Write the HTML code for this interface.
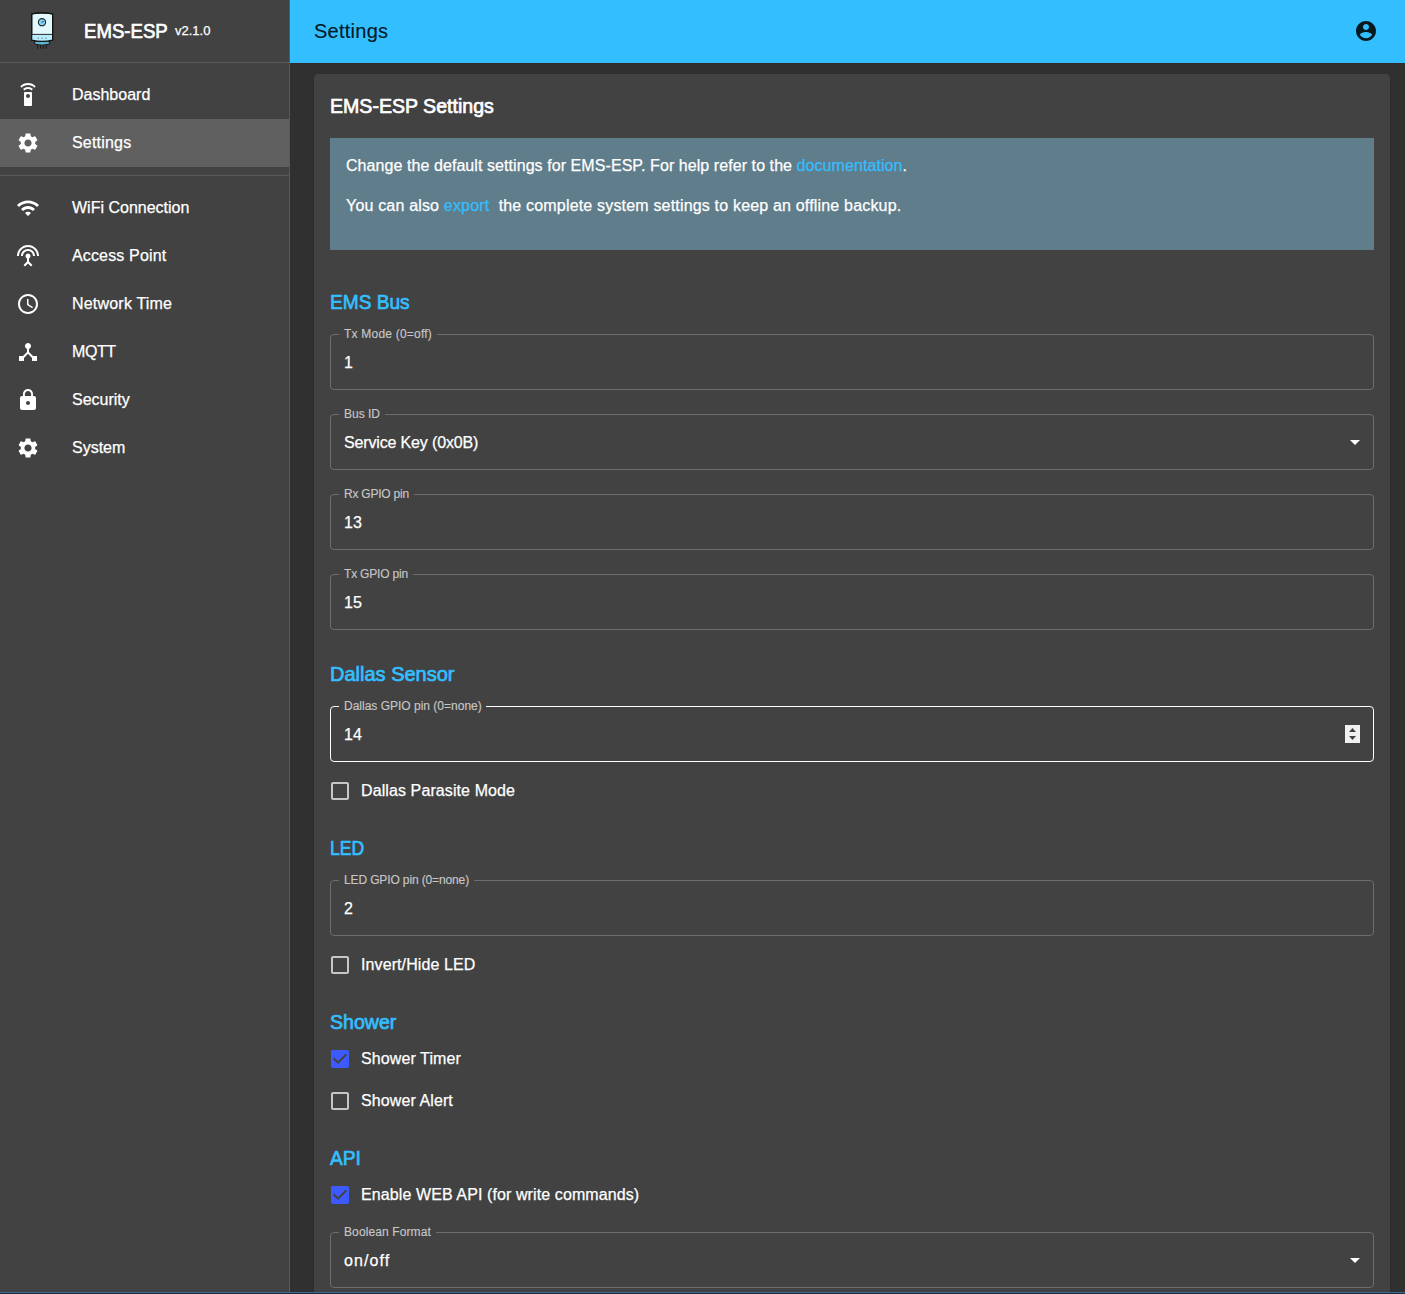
<!DOCTYPE html>
<html><head><meta charset="utf-8">
<style>
*{box-sizing:border-box;margin:0;padding:0}
html,body{width:1405px;height:1294px;overflow:hidden;background:#303030;font-family:"Liberation Sans",sans-serif;color:#fff}
#drawer{position:absolute;left:0;top:0;width:290px;height:1294px;background:#424242;border-right:1px solid #595959}
#dhead{position:absolute;left:0;top:0;width:289px;height:62px}
#dhead .t1{position:absolute;left:84px;top:19px;font-size:20px;font-weight:400;line-height:24px;-webkit-text-stroke:0.7px #fff;white-space:nowrap;transform:scaleX(0.93);transform-origin:0 0}
#dhead .t2{position:absolute;left:175px;top:23px;font-size:13px;line-height:15px;white-space:nowrap;-webkit-text-stroke:0.25px #fff}
.div{position:absolute;left:0;width:289px;height:1px;background:#595959}
.nav{position:absolute;left:0;width:289px;height:48px}
.nav.sel{background:#606060}
.nav svg{position:absolute;left:16px;top:12px;width:24px;height:24px;fill:#fff}
.nav span{position:absolute;left:72px;top:12px;font-size:16px;line-height:24px;white-space:nowrap;-webkit-text-stroke:0.25px currentColor}
#appbar{position:absolute;left:290px;top:0;width:1115px;height:63px;background:#33bfff;box-shadow:0 1px 0 #352a28;z-index:2}
#appbar .title{position:absolute;left:24px;top:15px;font-size:20px;line-height:32px;letter-spacing:0.25px;color:rgba(0,0,0,.87);-webkit-text-stroke:0.2px rgba(0,0,0,.87);white-space:nowrap}
#appbar svg{position:absolute;left:1064px;top:19px;width:24px;height:24px;fill:rgba(0,0,0,.87)}
#paper{display:flex;flex-direction:column;position:absolute;left:314px;top:74px;width:1076px;height:1300px;background:#424242;border-radius:4px;box-shadow:0 2px 1px -1px rgba(0,0,0,.2),0 1px 1px 0 rgba(0,0,0,.14),0 1px 3px 0 rgba(0,0,0,.12);padding:16px}
h6{font-size:20px;font-weight:400;line-height:32px;white-space:nowrap;-webkit-text-stroke:0.7px currentColor}
h6.p{color:#33bfff}
.info{background:#607d8b;padding:16px;margin-top:16px;margin-bottom:16px}
.info p{font-size:16px;line-height:24px;margin-bottom:16px;white-space:nowrap;-webkit-text-stroke:0.25px currentColor}
.info a{color:#33bfff;text-decoration:none}
.br{height:20px}
.field{position:relative;height:56px;margin-top:16px;margin-bottom:8px}
.field fieldset{position:absolute;left:0;top:-5px;right:0;bottom:0;border:1px solid #6d6d6d;border-radius:4px;padding:0 8px}
.field.hov fieldset{border-color:#fff}
.field legend{font-size:12px;line-height:11px;height:11px;padding:0;visibility:hidden;white-space:nowrap;overflow:hidden}
.field label{position:absolute;left:14px;top:-7px;font-size:12px;line-height:14px;color:#c6c6c6;white-space:nowrap;-webkit-text-stroke:0.15px currentColor}
.field .val{position:absolute;left:14px;top:19px;font-size:16px;line-height:19px;white-space:nowrap;-webkit-text-stroke:0.25px currentColor}
.field .arrow{position:absolute;right:7px;top:16px;width:24px;height:24px;fill:#fff}
.spin{position:absolute;left:1015px;top:19px;width:15px;height:18px;background:#f0f0f0}
.cb{position:relative;height:42px}
.cb svg{position:absolute;left:-2px;top:9px;width:24px;height:24px}
.cb span{position:absolute;left:31px;top:9px;font-size:16px;line-height:24px;letter-spacing:0.1px;white-space:nowrap;-webkit-text-stroke:0.25px currentColor}
#bline{position:absolute;left:0;top:1292px;width:1405px;height:2px;background:linear-gradient(#3a6a92 50%,#1c2c38 50%)}
</style></head><body>
<div id="drawer">
  <div id="dhead">
    <svg style="position:absolute;left:0;top:0" width="60" height="60" viewBox="0 0 60 60">
<path d="M34.7 41 H49.4 V44.2 Q42 46.2 34.7 44.2 Z" fill="#5fb3d4" stroke="#1a1a1a" stroke-width="1"/>
<path d="M37.6 45 V48.8 M40.5 45 V48.8 M43.4 45 V48.8 M46.3 45 V48.8" stroke="#1a1a1a" stroke-width="1"/>
<path d="M31.7 14 Q42 11.8 52.6 14 V40.2 Q42 42.6 31.7 40.2 Z" fill="#e1f8fd" stroke="#141414" stroke-width="1.2"/>
<path d="M31.7 34.6 H52.6 V40.2 Q42 42.6 31.7 40.2 Z" fill="#b8ecfb"/>
<path d="M31.7 34.4 H52.6" stroke="#2a2a2a" stroke-width="1"/>
<path d="M31.7 14 Q42 11.8 52.6 14 V40.2 Q42 42.6 31.7 40.2 Z" fill="none" stroke="#141414" stroke-width="1.2"/>
<circle cx="42" cy="22.2" r="3.6" fill="#7fd3f5" stroke="#222" stroke-width="1.1"/>
<path d="M42 22.6 L43.4 21" stroke="#111" stroke-width="0.9"/>
<path d="M37.6 38.2 H38.8 M41.4 38.2 H42.6 M45.2 38.2 H46.4" stroke="#555" stroke-width="0.9"/>
</svg>
    <div class="t1">EMS-ESP</div><div class="t2">v2.1.0</div>
  </div>
  <div class="div" style="top:62px"></div>
  <div class="nav" style="top:71px"><svg viewBox="0 0 24 24"><path d="M15 9H9c-.55 0-1 .45-1 1v12c0 .55.45 1 1 1h6c.55 0 1-.45 1-1V10c0-.55-.45-1-1-1zm-3 6c-1.1 0-2-.9-2-2s.9-2 2-2 2 .9 2 2-.9 2-2 2zM7.05 6.05l1.41 1.41C9.37 6.56 10.62 6 12 6s2.63.56 3.54 1.46l1.41-1.41C15.68 4.78 13.93 4 12 4s-3.68.78-4.95 2.05zM12 0C8.96 0 6.21 1.23 4.22 3.22l1.41 1.41C7.26 3.01 9.51 2 12 2s4.74 1.01 6.36 2.64l1.41-1.41C17.79 1.23 15.04 0 12 0z"/></svg><span>Dashboard</span></div>
  <div class="nav sel" style="top:119px"><svg viewBox="0 0 24 24"><path d="M19.14 12.94c.04-.3.06-.61.06-.94 0-.32-.02-.64-.07-.94l2.03-1.58c.18-.14.23-.41.12-.61l-1.92-3.32c-.12-.22-.37-.29-.59-.22l-2.39.96c-.5-.38-1.03-.7-1.62-.94l-.36-2.54c-.04-.24-.24-.41-.48-.41h-3.84c-.24 0-.43.17-.47.41l-.36 2.54c-.59.24-1.13.57-1.62.94l-2.39-.96c-.22-.08-.47 0-.59.22L2.74 8.87c-.12.21-.08.47.12.61l2.03 1.58c-.05.3-.09.63-.09.94s.02.64.07.94l-2.03 1.58c-.18.14-.23.41-.12.61l1.92 3.32c.12.22.37.29.59.22l2.39-.96c.5.38 1.03.7 1.62.94l.36 2.54c.05.24.24.41.48.41h3.84c.24 0 .44-.17.47-.41l.36-2.54c.59-.24 1.13-.56 1.62-.94l2.39.96c.22.08.47 0 .59-.22l1.92-3.32c.12-.22.07-.47-.12-.61l-2.01-1.58zM12 15.6c-1.98 0-3.6-1.62-3.6-3.6s1.62-3.6 3.6-3.6 3.6 1.62 3.6 3.6-1.62 3.6-3.6 3.6z"/></svg><span style="letter-spacing:0.2px">Settings</span></div>
  <div class="div" style="top:175px"></div>
  <div class="nav" style="top:184px"><svg viewBox="0 0 24 24"><path d="M1 9l2 2c4.97-4.97 13.03-4.97 18 0l2-2C16.93 2.93 7.08 2.93 1 9zm8 8l3 3 3-3c-1.65-1.66-4.34-1.66-6 0zm-4-4l2 2c2.76-2.76 7.24-2.76 10 0l2-2C15.14 9.14 8.87 9.14 5 13z"/></svg><span>WiFi Connection</span></div>
  <div class="nav" style="top:232px"><svg viewBox="0 0 24 24"><path d="M12 5c-3.87 0-7 3.13-7 7h2c0-2.76 2.24-5 5-5s5 2.24 5 5h2c0-3.87-3.13-7-7-7zm1 9.29c.88-.39 1.5-1.26 1.5-2.29 0-1.38-1.12-2.5-2.5-2.5S9.5 10.62 9.5 12c0 1.02.62 1.9 1.5 2.29v3.3L7.59 21 9 22.41l3-3 3 3L16.41 21 13 17.59v-3.3zM12 1C5.93 1 1 5.93 1 12h2c0-4.97 4.03-9 9-9s9 4.03 9 9h2c0-6.07-4.93-11-11-11z"/></svg><span style="letter-spacing:0.15px">Access Point</span></div>
  <div class="nav" style="top:280px"><svg viewBox="0 0 24 24"><path d="M11.99 2C6.47 2 2 6.48 2 12s4.47 10 9.99 10C17.52 22 22 17.52 22 12S17.52 2 11.99 2zM12 20c-4.42 0-8-3.58-8-8s3.58-8 8-8 8 3.58 8 8-3.58 8-8 8zm.5-13H11v6l5.25 3.15.75-1.23-4.5-2.67z"/></svg><span style="letter-spacing:0.2px">Network Time</span></div>
  <div class="nav" style="top:328px"><svg viewBox="0 0 24 24"><path d="M17 16l-4-4V8.82C14.16 8.4 15 7.3 15 6c0-1.66-1.34-3-3-3S9 4.34 9 6c0 1.3.84 2.4 2 2.82V12l-4 4H3v5h5v-3.05l4-4.2 4 4.2V21h5v-5h-4z"/></svg><span style="letter-spacing:-0.4px">MQTT</span></div>
  <div class="nav" style="top:376px"><svg viewBox="0 0 24 24"><path d="M18 8h-1V6c0-2.76-2.24-5-5-5S7 3.24 7 6v2H6c-1.1 0-2 .9-2 2v10c0 1.1.9 2 2 2h12c1.1 0 2-.9 2-2V10c0-1.1-.9-2-2-2zm-6 9c-1.1 0-2-.9-2-2s.9-2 2-2 2 .9 2 2-.9 2-2 2zm3.1-9H8.9V6c0-1.71 1.39-3.1 3.1-3.1 1.710 0 3.1 1.39 3.1 3.1v2z"/></svg><span>Security</span></div>
  <div class="nav" style="top:424px"><svg viewBox="0 0 24 24"><path d="M19.14 12.94c.04-.3.06-.61.06-.94 0-.32-.02-.64-.07-.94l2.03-1.58c.18-.14.23-.41.12-.61l-1.92-3.32c-.12-.22-.37-.29-.59-.22l-2.39.96c-.5-.38-1.03-.7-1.62-.94l-.36-2.54c-.04-.24-.24-.41-.48-.41h-3.84c-.24 0-.43.17-.47.41l-.36 2.54c-.59.24-1.13.57-1.62.94l-2.39-.96c-.22-.08-.47 0-.59.22L2.74 8.87c-.12.21-.08.47.12.61l2.03 1.58c-.05.3-.09.63-.09.94s.02.64.07.94l-2.03 1.58c-.18.14-.23.41-.12.61l1.92 3.32c.12.22.37.29.59.22l2.39-.96c.5.38 1.03.7 1.62.94l.36 2.54c.05.24.24.41.48.41h3.84c.24 0 .44-.17.47-.41l.36-2.54c.59-.24 1.13-.56 1.62-.94l2.39.96c.22.08.47 0 .59-.22l1.92-3.32c.12-.22.07-.47-.12-.61l-2.01-1.58zM12 15.6c-1.98 0-3.6-1.62-3.6-3.6s1.62-3.6 3.6-3.6 3.6 1.62 3.6 3.6-1.62 3.6-3.6 3.6z"/></svg><span>System</span></div>
</div>
<div id="appbar"><div class="title">Settings</div>
<svg viewBox="0 0 24 24"><path d="M12 2C6.48 2 2 6.48 2 12s4.48 10 10 10 10-4.480 10-10S17.52 2 12 2zm0 3c1.66 0 3 1.34 3 3s-1.34 3-3 3-3-1.34-3-3 1.34-3 3-3zm0 14.2c-2.5 0-4.71-1.28-6-3.22.03-1.99 4-3.08 6-3.08 1.99 0 5.97 1.09 6 3.08-1.29 1.94-3.5 3.22-6 3.22z"/></svg></div>
<div id="paper">
  <h6 style="transform:scaleX(0.978);transform-origin:0 0">EMS-ESP Settings</h6>
  <div class="info"><p style="letter-spacing:0.07px">Change the default settings for EMS-ESP. For help refer to the <a>documentation</a>.</p><p style="letter-spacing:0.18px">You can also <a>export</a>&nbsp; the complete system settings to keep an offline backup.</p></div>
  <div class="br"></div>
  <h6 class="p" style="transform:scaleX(0.955);transform-origin:0 0">EMS Bus</h6>
  <div class="field "><fieldset><legend style="width:98px">Tx Mode (0=off)</legend></fieldset><label style="letter-spacing:0.21px">Tx Mode (0=off)</label><div class="val">1</div></div>
  <div class="field "><fieldset><legend style="width:46px">Bus ID</legend></fieldset><label>Bus ID</label><div class="val" style="letter-spacing:-0.15px">Service Key (0x0B)</div><svg class="arrow" viewBox="0 0 24 24"><path d="M7 10l5 5 5-5z"/></svg></div>
  <div class="field "><fieldset><legend style="width:75px">Rx GPIO pin</legend></fieldset><label style="letter-spacing:-0.22px">Rx GPIO pin</label><div class="val">13</div></div>
  <div class="field "><fieldset><legend style="width:74px">Tx GPIO pin</legend></fieldset><label style="letter-spacing:-0.18px">Tx GPIO pin</label><div class="val">15</div></div>
  <div class="br"></div>
  <h6 class="p">Dallas Sensor</h6>
  <div class="field hov"><fieldset><legend style="width:147px">Dallas GPIO pin (0=none)</legend></fieldset><label>Dallas GPIO pin (0=none)</label><div class="val">14</div><div class="spin"><svg width="15" height="18" viewBox="0 0 15 18" style="position:absolute;left:0;top:0"><path d="M4 7L7.5 3 11 7z M4 11L7.5 15 11 11z" fill="#404040"/></svg></div></div>
  <div class="cb"><svg viewBox="0 0 24 24"><path fill="#c6c6c6" d="M19 5v14H5V5h14m0-2H5c-1.1 0-2 .9-2 2v14c0 1.1.9 2 2 2h14c1.1 0 2-.9 2-2V5c0-1.1-.9-2-2-2z"/></svg><span>Dallas Parasite Mode</span></div>
  <div class="br"></div>
  <h6 class="p" style="transform:scaleX(0.88);transform-origin:0 0">LED</h6>
  <div class="field "><fieldset><legend style="width:135px">LED GPIO pin (0=none)</legend></fieldset><label style="letter-spacing:-0.13px">LED GPIO pin (0=none)</label><div class="val">2</div></div>
  <div class="cb"><svg viewBox="0 0 24 24"><path fill="#c6c6c6" d="M19 5v14H5V5h14m0-2H5c-1.1 0-2 .9-2 2v14c0 1.1.9 2 2 2h14c1.1 0 2-.9 2-2V5c0-1.1-.9-2-2-2z"/></svg><span>Invert/Hide LED</span></div>
  <div class="br"></div>
  <h6 class="p" style="transform:scaleX(0.978);transform-origin:0 0">Shower</h6>
  <div class="cb"><svg viewBox="0 0 24 24"><path fill="#3d5afe" d="M19 3H5c-1.11 0-2 .9-2 2v14c0 1.1.89 2 2 2h14c1.11 0 2-.9 2-2V5c0-1.1-.89-2-2-2zm-9 14l-5-5 1.41-1.41L10 14.17l7.59-7.59L19 8l-9 9z"/></svg><span>Shower Timer</span></div>
  <div class="cb"><svg viewBox="0 0 24 24"><path fill="#c6c6c6" d="M19 5v14H5V5h14m0-2H5c-1.1 0-2 .9-2 2v14c0 1.1.9 2 2 2h14c1.1 0 2-.9 2-2V5c0-1.1-.9-2-2-2z"/></svg><span>Shower Alert</span></div>
  <div class="br"></div>
  <h6 class="p" style="transform:scaleX(0.96);transform-origin:0 0">API</h6>
  <div class="cb"><svg viewBox="0 0 24 24"><path fill="#3d5afe" d="M19 3H5c-1.11 0-2 .9-2 2v14c0 1.1.89 2 2 2h14c1.11 0 2-.9 2-2V5c0-1.1-.89-2-2-2zm-9 14l-5-5 1.41-1.41L10 14.17l7.59-7.59L19 8l-9 9z"/></svg><span>Enable WEB API (for write commands)</span></div>
  <div class="field "><fieldset><legend style="width:97px">Boolean Format</legend></fieldset><label style="letter-spacing:0.11px">Boolean Format</label><div class="val" style="letter-spacing:1.1px">on/off</div><svg class="arrow" viewBox="0 0 24 24"><path d="M7 10l5 5 5-5z"/></svg></div>
</div>
<div id="bline"></div>
</body></html>
